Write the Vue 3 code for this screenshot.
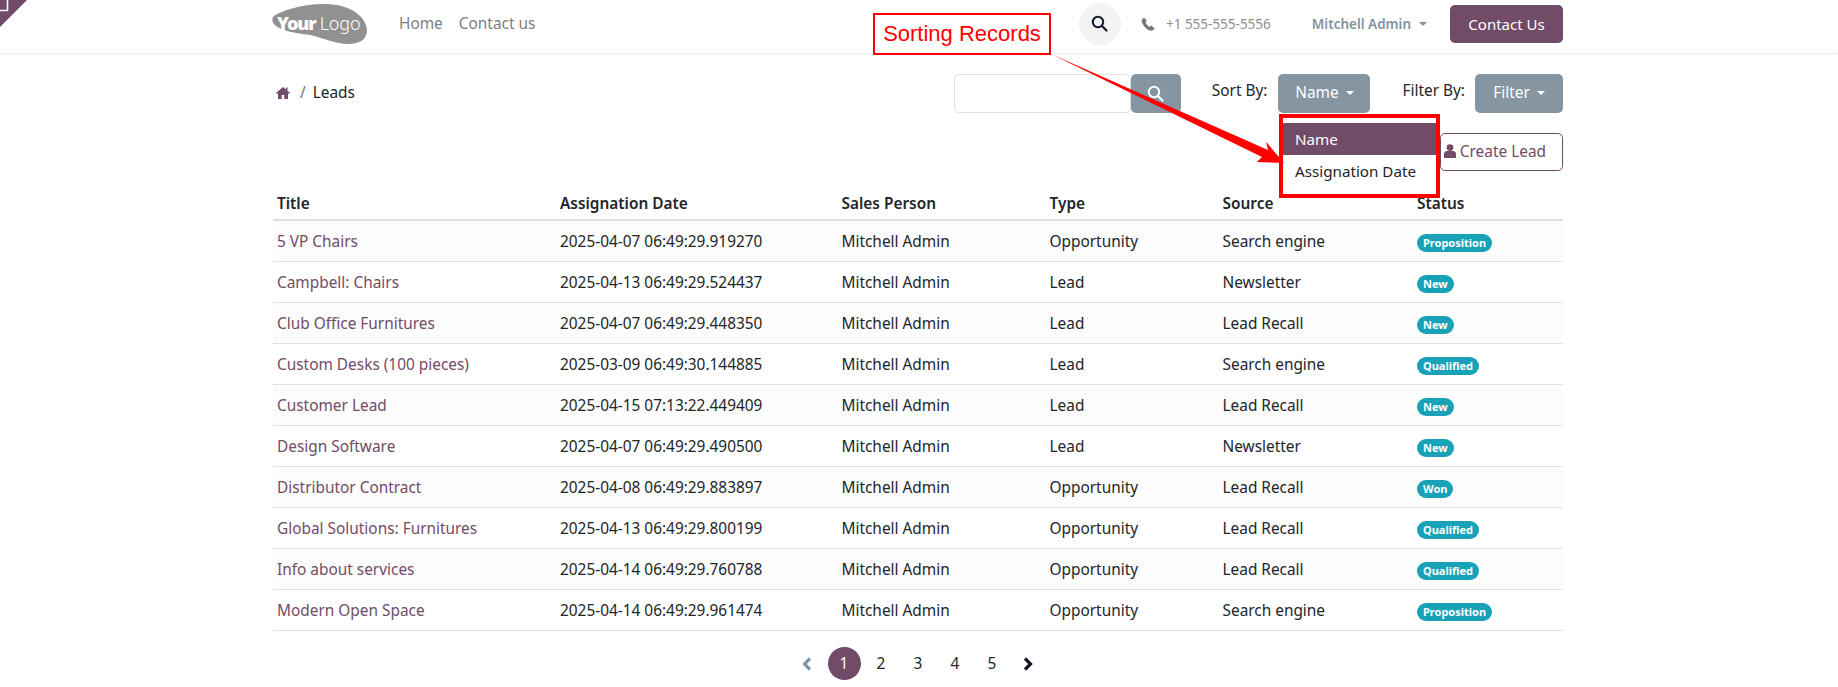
<script setup>
const columns = ['Title', 'Assignation Date', 'Sales Person', 'Type', 'Source', 'Status']
const rows = [
  ['5 VP Chairs', '2025-04-07 06:49:29.919270', 'Opportunity', 'Search engine', 'Proposition'],
  ['Campbell: Chairs', '2025-04-13 06:49:29.524437', 'Lead', 'Newsletter', 'New'],
  ['Club Office Furnitures', '2025-04-07 06:49:29.448350', 'Lead', 'Lead Recall', 'New'],
  ['Custom Desks (100 pieces)', '2025-03-09 06:49:30.144885', 'Lead', 'Search engine', 'Qualified'],
  ['Customer Lead', '2025-04-15 07:13:22.449409', 'Lead', 'Lead Recall', 'New'],
  ['Design Software', '2025-04-07 06:49:29.490500', 'Lead', 'Newsletter', 'New'],
  ['Distributor Contract', '2025-04-08 06:49:29.883897', 'Opportunity', 'Lead Recall', 'Won'],
  ['Global Solutions: Furnitures', '2025-04-13 06:49:29.800199', 'Opportunity', 'Lead Recall', 'Qualified'],
  ['Info about services', '2025-04-14 06:49:29.760788', 'Opportunity', 'Lead Recall', 'Qualified'],
  ['Modern Open Space', '2025-04-14 06:49:29.961474', 'Opportunity', 'Search engine', 'Proposition'],
]
const pages = [1, 2, 3, 4, 5]
</script>

<template>
  <div class="page">
    <svg class="corner" width="27" height="27" viewBox="0 0 27 27">
      <path d="M0 0H27L0 27Z" fill="#714b67" />
      <path d="M0 10.500H7.500V0" fill="none" stroke="#fff" stroke-width="1.600" />
    </svg>

    <header class="navbar">
      <div class="logo">
        <svg width="95" height="40" viewBox="0 0 95 40">
          <path d="M1 13C5 9 12 7 22 4C36 0 52-1 65 1C82 4 94 14 95 26C95 35 88 40 76 40C64 40 52 34 38 31C22 29 6 26 2 20C0 18 0 15 1 13Z" fill="#919191" />
        </svg>
        <span class="logo-text"><b>Your</b>Logo</span>
      </div>
      <nav class="nav-links">
        <a>Home</a>
        <a>Contact us</a>
      </nav>
      <div class="nav-right">
        <span class="search-circle">
          <svg width="17" height="17" viewBox="0 0 17 17"><circle cx="7" cy="7" r="5.200" fill="none" stroke="#111827" stroke-width="2" /><path d="M11 11L15.500 15.500" stroke="#111827" stroke-width="2.200" stroke-linecap="round" /></svg>
        </span>
        <span class="phone">
          <svg width="14" height="14" viewBox="0 0 13 13"><path d="M3 .6L1 2C.3 3 .5 5 2.300 7.600C4.300 10.500 7 12.600 9.500 12.700C10.700 12.700 12 11.800 12.600 10.600L9.600 8L8 9.200C6.500 8.500 4.800 6.500 4.300 5L5.400 3.400Z" fill="#777" /></svg>
          <span>+1 555-555-5556</span>
        </span>
        <span class="user">Mitchell Admin<i class="caret"></i></span>
        <button class="contact">Contact Us</button>
      </div>
    </header>

    <main class="container">
      <div class="toolbar">
        <div class="crumbs">
          <svg width="14" height="13" viewBox="0 0 14 13"><path d="M7 1L0 7L1 8L2 7.200V13H5.700V9H8.300V13H12V7.200L13 8L14 7L11.500 4.800V1.500H9.800V3.400Z" fill="#714b67" /></svg>
          <span class="slash">/</span>
          <span>Leads</span>
        </div>
        <div class="search-group">
          <span class="search-input"></span>
          <span class="search-btn">
            <svg width="17" height="17" viewBox="0 0 17 17"><circle cx="7" cy="7" r="5.200" fill="none" stroke="#fff" stroke-width="2" /><path d="M11 11L15.500 15.500" stroke="#fff" stroke-width="2.200" stroke-linecap="round" /></svg>
          </span>
        </div>
        <span class="sort-label">Sort By:</span>
        <button class="grey name-btn">Name<i class="caret white"></i></button>
        <span class="filter-label">Filter By:</span>
        <button class="grey filter-btn">Filter<i class="caret white"></i></button>
      </div>

      <div class="create-row">
        <button class="create">
          <svg width="12" height="14" viewBox="0 0 12 14"><circle cx="6" cy="3.600" r="3.400" fill="#714b67" /><path d="M0 14V10C0 8 1.500 7 3 7H9C10.500 7 12 8 12 10V14Z" fill="#714b67" /></svg>
          Create Lead
        </button>
      </div>

      <table class="leads">
        <thead>
          <tr>
            <th v-for="c in columns" :key="c">{{ c }}</th>
          </tr>
        </thead>
        <tbody>
          <tr v-for="r in rows" :key="r[0]">
            <td class="link">{{ r[0] }}</td>
            <td>{{ r[1] }}</td>
            <td>Mitchell Admin</td>
            <td>{{ r[2] }}</td>
            <td>{{ r[3] }}</td>
            <td><span class="badge">{{ r[4] }}</span></td>
          </tr>
        </tbody>
      </table>

      <div class="pager">
        <svg class="chev prev" width="12" height="14" viewBox="0 0 12 14"><path d="M9 1.500L3.500 7L9 12.500" fill="none" stroke="#8595a2" stroke-width="3.200" /></svg>
        <span v-for="p in pages" :key="p" class="pg" :class="{ on: p === 1 }">{{ p }}</span>
        <svg class="chev next" width="12" height="14" viewBox="0 0 12 14"><path d="M3 1.500L8.500 7L3 12.500" fill="none" stroke="#111827" stroke-width="3.200" /></svg>
      </div>
    </main>

    <div class="menu">
      <div class="item active">Name</div>
      <div class="item">Assignation Date</div>
    </div>

    <svg class="arrow" width="1838" height="687" viewBox="0 0 1838 687">
      <path d="M1051 54L1268 150L1266 141.700L1284 163L1256.700 162L1262 157Z" fill="#ff0000" />
    </svg>
    <div class="red-box"></div>
    <div class="callout">Sorting Records</div>
  </div>
</template>

<style>
html, body { margin: 0; padding: 0; background: #fff; }
</style>

<style scoped>
.page {
  position: relative;
  width: 1838px;
  height: 687px;
  overflow: hidden;
  background: #fff;
  color: #212529;
  font-family: "Noto Sans", "Open Sans", sans-serif;
  font-size: 15.400px;
}
.corner { position: absolute; left: 0; top: 0; }
.navbar {
  height: 54px;
  box-sizing: border-box;
  padding: 0 275px 6px 272px;
  display: flex;
  align-items: center;
  border-bottom: 1px solid #eceded;
  box-shadow: 0 1px 2px rgba(0,0,0,.04);
}
.logo { position: relative; width: 95px; height: 40px; }
.logo svg { display: block; }
.logo-text {
  position: absolute;
  left: 5px;
  top: 4px;
  color: #fff;
  font-size: 18px;
  line-height: 30px;
  font-weight: 300;
  letter-spacing: -.1px;
  white-space: nowrap;
}
.logo-text b { font-weight: 900; letter-spacing: -1.100px; margin-right: 4px; }
.nav-links { display: flex; gap: 16px; margin-left: 32px; color: #7b7f85; }
.nav-right { display: flex; align-items: center; margin-left: auto; }
.search-circle {
  width: 42px; height: 42px; border-radius: 50%; background: #f3f3f3;
  display: flex; align-items: center; justify-content: center;
}
.phone { display: flex; align-items: center; gap: 11px; margin-left: 20px; color: #8c8f94; font-size: 13.500px; }
.user { margin-left: 41px; font-weight: 600; font-size: 13.500px; color: #85929e; display: flex; align-items: center; }
.caret {
  display: inline-block;
  margin-left: 8px;
  border-top: 4.500px solid #85929e;
  border-left: 4.500px solid transparent;
  border-right: 4.500px solid transparent;
}
.caret.white { border-top-color: #fff; margin-left: 7px; }
.contact {
  margin-left: 23px;
  width: 113px; height: 38px;
  background: #714b67; color: #fff; border: 0; border-radius: 5px;
  font-family: inherit; font-size: 15px;
}
.container { width: 1290px; margin-left: 273px; }
.toolbar { display: flex; align-items: center; height: 39px; margin-top: 20px; }
.crumbs { display: flex; align-items: center; margin-left: 3px; padding-bottom: 3px; }
.slash { margin: 0 7px 0 10px; color: #6c757d; }
.search-group { display: flex; margin-left: auto; height: 39px; }
.search-input {
  width: 177px; box-sizing: border-box;
  border: 1px solid #dee2e6; border-radius: 5px;
}
.search-btn {
  width: 50px; background: #8595a2; border-radius: 5px;
  display: flex; align-items: center; justify-content: center;
}
.sort-label { margin-left: 31px; margin-bottom: 7px; }
.grey {
  height: 39px; border: 0; border-radius: 5px; background: #8595a2; color: #fff;
  font-family: inherit; font-size: 15.400px;
  display: flex; align-items: center; justify-content: center; padding: 0 0 2px;
}
.name-btn { width: 92px; margin-left: 11px; }
.filter-label { margin-left: 32px; margin-bottom: 7px; }
.filter-btn { width: 88px; margin-left: 10px; }
.create-row { display: flex; justify-content: flex-end; margin-top: 20px; }
.create {
  width: 123px; height: 38px; box-sizing: border-box;
  background: #fff; color: #714b67; border: 1px solid #714b67; border-radius: 5px;
  font-family: inherit; font-size: 15.400px;
  display: flex; align-items: center; justify-content: flex-end; gap: 4px; padding: 0 16px 2px 0;
}
.leads { width: 1290px; border-collapse: collapse; table-layout: fixed; margin-top: 17px; }
.leads th:nth-child(1) { width: 283px; }
.leads th:nth-child(2) { width: 281.500px; }
.leads th:nth-child(3) { width: 208px; }
.leads th:nth-child(4) { width: 173px; }
.leads th:nth-child(5) { width: 194.500px; }
.leads th {
  height: 32px; padding: 0 4px; text-align: left; font-weight: 600;
  border-bottom: 2px solid #dfe0e1; box-sizing: border-box;
}
.leads td {
  height: 41px; padding: 2px 4px 0; box-sizing: border-box;
  border-bottom: 1px solid #dee2e6;
}
.leads tbody tr:nth-child(odd) td { background: #fcfcfc; }
.link { color: #714b67; }
.badge {
  display: inline-block;
  background: #17a2b8; color: #fff; border-radius: 9px;
  font-size: 11px; font-weight: 700; padding: 0 6px; line-height: 18px;
}
.pager { display: flex; align-items: center; justify-content: center; height: 34px; margin-top: 16px; }
.chev { margin: 0 8px; }
.chev.prev { margin-left: 3px; margin-right: 13px; }
.chev.next { margin-left: 11px; margin-right: 5px; }
.pg { width: 33px; height: 33px; margin: 0 2px 0 2px; border-radius: 50%; display: flex; align-items: center; justify-content: center; }
.pg.on { background: #714b67; color: #fff; }
.menu {
  position: absolute; left: 1279px; top: 114px; width: 161px; height: 84px; box-sizing: border-box;
  padding-top: 9px; background: #fff;
}
.item { height: 32px; line-height: 32px; padding-left: 16px; font-size: 15.200px; }
.item.active { background: #714b67; color: #fff; }
.arrow { position: absolute; left: 0; top: 0; pointer-events: none; }
.red-box {
  position: absolute; left: 1279px; top: 114px; width: 161px; height: 84px; box-sizing: border-box;
  border: 4px solid #f00;
}
.callout {
  position: absolute; left: 873px; top: 13px; width: 178px; height: 42px; box-sizing: border-box;
  border: 2px solid #f00; background: #fff; color: #f00;
  font-family: "Liberation Sans", sans-serif; font-size: 22px;
  display: flex; align-items: center; justify-content: center;
}
</style>
